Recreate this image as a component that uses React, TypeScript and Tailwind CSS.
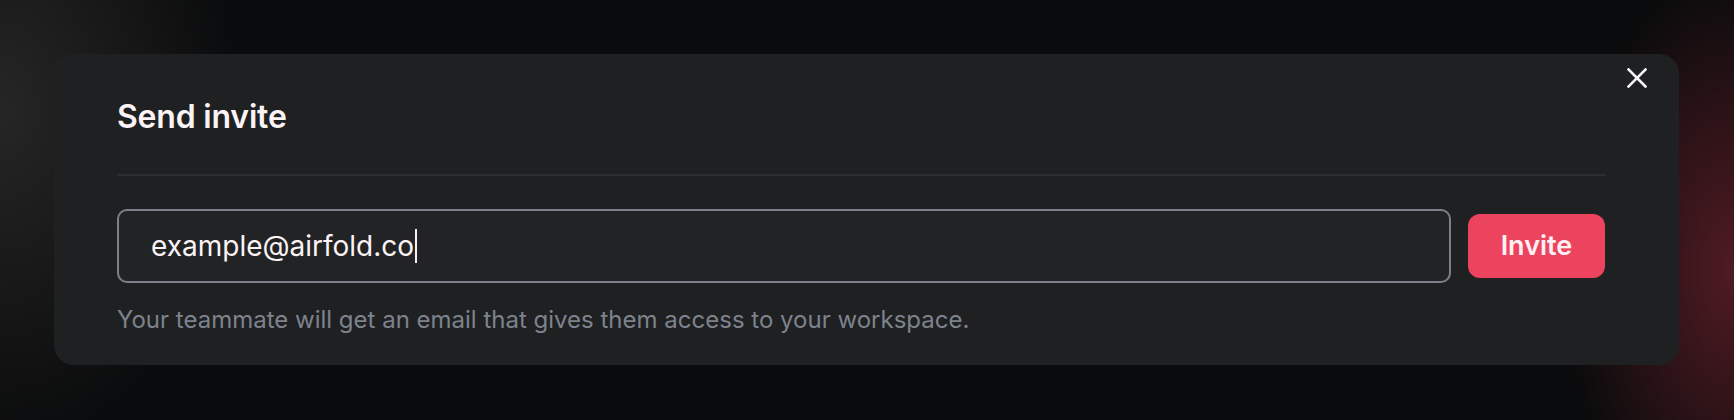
const CloseIcon = () => (
  <svg width="20" height="20" viewBox="0 0 20 20" fill="none">
    <path
      d="M1.5 1.5L18.5 18.5M18.5 1.5L1.5 18.5"
      stroke="#f5f3f5"
      strokeWidth="2.6"
      strokeLinecap="square"
    />
  </svg>
);

export default function App() {
  return (
    <div
      className="relative h-[420px] w-full overflow-hidden bg-[#0a0b0c] pt-[54px] pl-[54px]"
      style={{ fontFamily: "Inter, 'Noto Sans', sans-serif" }}
    >
      <div className="pointer-events-none absolute inset-0 bg-[radial-gradient(ellipse_240px_340px_at_0px_110px,rgba(58,56,56,0.6),transparent)]" />
      <div className="pointer-events-none absolute inset-0 bg-[radial-gradient(ellipse_170px_300px_at_1734px_270px,rgba(110,34,44,0.7),transparent)]" />

      <div className="relative w-[1625px] h-[311px] rounded-[20px] bg-[#1f2022] pt-[43px] pl-[63px] pr-[74px]">
        <button className="absolute right-[32px] top-[14px] flex items-center justify-center">
          <CloseIcon />
        </button>

        <h2 className="text-[32px] leading-[40px] font-semibold text-[#fbf3f6] tracking-[-0.2px]">
          Send invite
        </h2>

        <div className="mt-[37px] h-[2px] bg-[#2d2e31]" />

        <div className="mt-[33px] flex items-center gap-[17px]">
          <div className="flex-1 h-[74px] rounded-[10px] border-2 border-[#7b818b] bg-[#222325] pl-[32px] flex items-center">
            <span className="text-[28px] text-[#fbf3f6] leading-none">
              example@airfold.co
            </span>
            <span className="ml-[1px] inline-block w-[2px] h-[34px] bg-[#fbeef3]" />
          </div>
          <button className="w-[137px] h-[64px] rounded-[12px] bg-[#ec445e] text-[27px] font-semibold text-[#fdf1f4]">
            Invite
          </button>
        </div>

        <p className="mt-[21px] text-[24px] leading-[32px] text-[#7d838d]">
          Your teammate will get an email that gives them access to your workspace.
        </p>
      </div>
    </div>
  );
}
